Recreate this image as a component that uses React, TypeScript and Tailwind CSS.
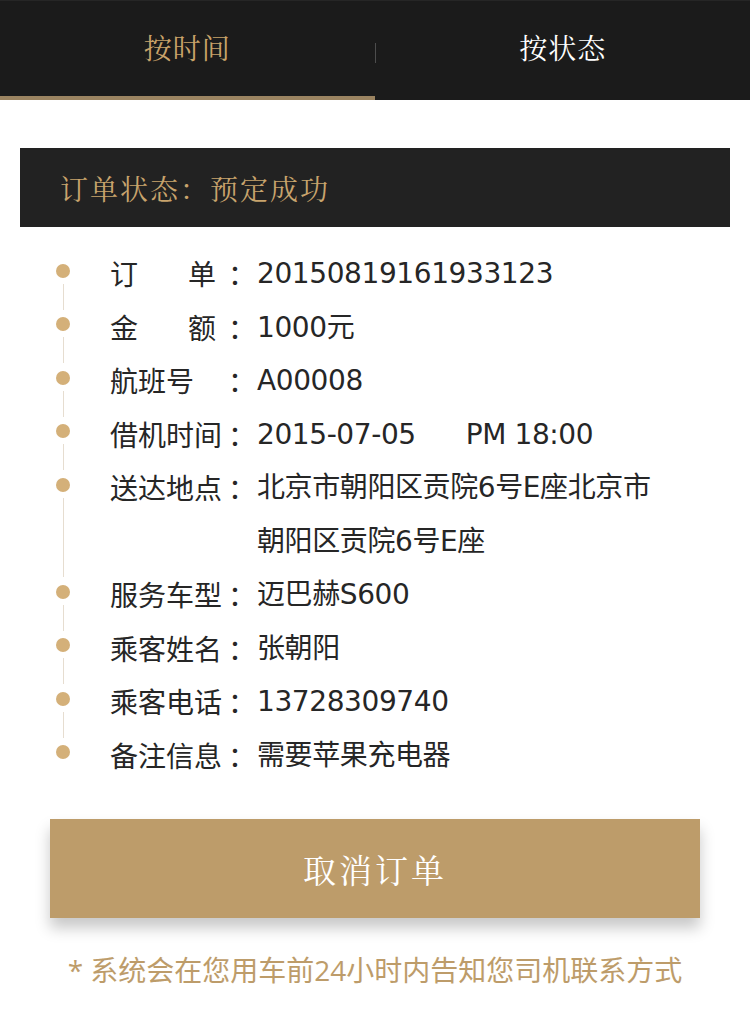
import { useState } from 'react'

type Row = {
  label: string
  justify?: boolean
  value: React.ReactNode
}

const ROWS: Row[] = [
  { label: '订单', justify: true, value: '20150819161933123' },
  { label: '金额', justify: true, value: '1000元' },
  { label: '航班号', value: 'A00008' },
  {
    label: '借机时间',
    value: (
      <>
        2015-07-05<span className="ml-[50px]">PM 18:00</span>
      </>
    ),
  },
  { label: '送达地点', value: '北京市朝阳区贡院6号E座北京市朝阳区贡院6号E座' },
  { label: '服务车型', value: '迈巴赫S600' },
  { label: '乘客姓名', value: '张朝阳' },
  { label: '乘客电话', value: '13728309740' },
  { label: '备注信息', value: '需要苹果充电器' },
]

const serif = '[font-family:"Noto_Serif_CJK_SC","Liberation_Serif","Noto_Sans_CJK_SC",serif]'

export default function App() {
  const [tab, setTab] = useState<'time' | 'status'>('time')

  return (
    <div className="min-h-[1023px] w-[750px] bg-white [font-family:'Noto_Sans_CJK_SC',sans-serif]">
      {/* Tabs */}
      <nav className="flex h-[100px] border-t border-[#262626] bg-[#1b1b1b]">
        <button
          onClick={() => setTab('time')}
          className={`flex flex-1 items-center justify-center border-b-4 pb-[4px] text-[28px] tracking-[1px] ${serif} ${
            tab === 'time' ? 'border-[#9b8461] text-[#c9a36a]' : 'border-transparent text-white'
          }`}
        >
          按时间
        </button>
        <div className="mt-[4px] h-[20px] w-px self-center bg-[#4d4d4d]" />
        <button
          onClick={() => setTab('status')}
          className={`flex flex-1 items-center justify-center border-b-4 pb-[4px] text-[28px] tracking-[1px] ${serif} ${
            tab === 'status' ? 'border-[#9b8461] text-[#c9a36a]' : 'border-transparent text-white'
          }`}
        >
          按状态
        </button>
      </nav>

      {/* Status header */}
      <div className={`mx-5 mt-12 flex h-[79px] items-center bg-[#222222] pl-10 text-[28px] tracking-[2px] text-[#c8a46d] ${serif}`}>
        订单状态：预定成功
      </div>

      {/* Detail list */}
      <ul className="pt-[20px] text-[28px] leading-[53.5px] text-[#262626]">
        {ROWS.map((row, i) => (
          <li key={row.label} className="flex">
            <div className="ml-[56px] mr-[40px] flex w-[14px] flex-col items-center">
              <span className="mt-[16.75px] h-[14px] w-[14px] shrink-0 rounded-full bg-[#d4b079]" />
              {i < ROWS.length - 1 && <span className="mb-[-9px] mt-[6px] w-px flex-1 bg-[#e6ddd0]" />}
            </div>
            <span
              className={`shrink-0 whitespace-nowrap ${
                row.justify ? 'mr-[6px] w-[106px] [text-align-last:justify]' : 'w-[112px]'
              }`}
            >
              {row.label}
            </span>
            <span className="w-[35px] shrink-0 pl-[6px]">：</span>
            <span className="w-[410px] tracking-[-0.4px] [font-family:'DejaVu_Sans','Noto_Sans_CJK_SC',sans-serif]">
              {row.value}
            </span>
          </li>
        ))}
      </ul>

      {/* Cancel button */}
      <button
        className={`mx-[50px] mt-[37px] flex h-[99px] w-[650px] items-center justify-center bg-[#bd9c6a] text-[33px] tracking-[3px] text-white shadow-[0_10px_14px_rgba(0,0,0,0.22)] ${serif}`}
      >
        取消订单
      </button>

      <p className="mt-[32px] text-center text-[28px] leading-[40px] text-[#bd9c6a] [font-family:'Open_Sans','Noto_Sans_CJK_SC',sans-serif]">
        * 系统会在您用车前24小时内告知您司机联系方式
      </p>
    </div>
  )
}
